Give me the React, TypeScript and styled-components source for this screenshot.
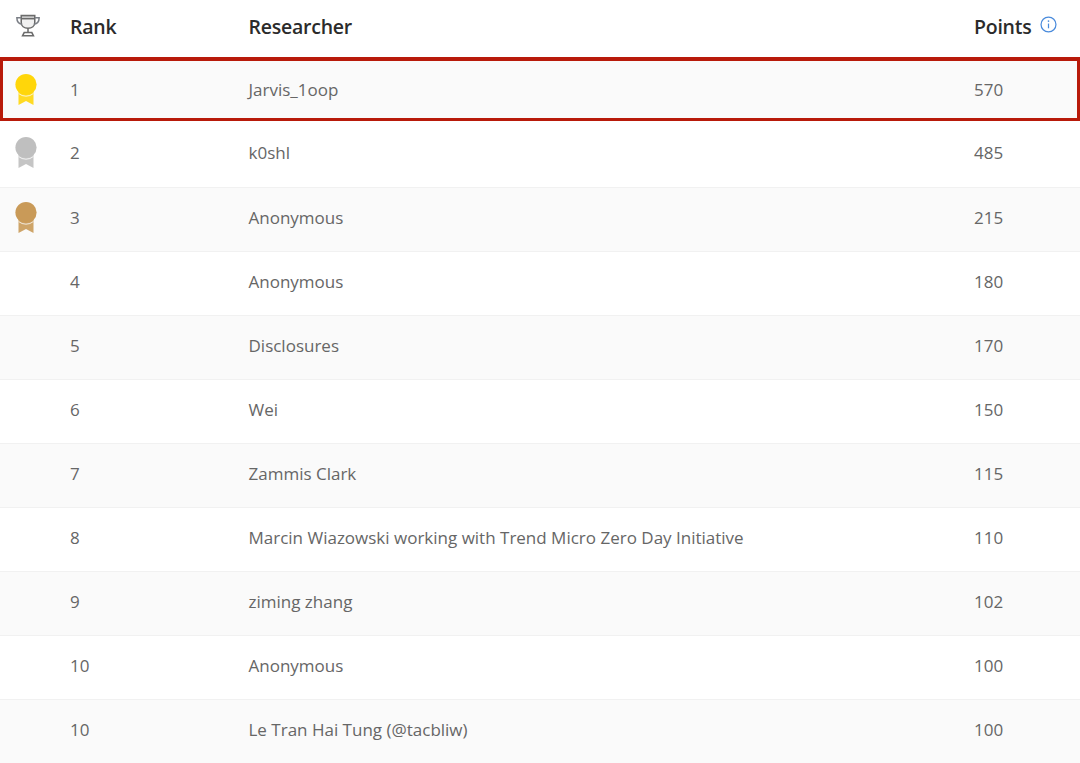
import React from "react";
import styled, { createGlobalStyle } from "styled-components";

const Global = createGlobalStyle`
  html, body { margin: 0; padding: 0; background: #fff; overflow: hidden; }
  body { font-family: "Open Sans", "Noto Sans", "Liberation Sans", sans-serif; }
`;

const Board = styled.div`
  width: 1080px;
  height: 763px;
  overflow: hidden;
  display: flex;
  flex-direction: column;
`;

const grid = `
  display: grid;
  grid-template-columns: 70px 178.5px 725.5px 1fr;
  align-items: center;
`;

const Header = styled.div`
  ${grid}
  height: 57px;
  flex: none;
  box-sizing: border-box;
  padding-bottom: 5px;
  font-size: 19.5px;
  font-weight: 600;
  color: #2b2b2b;
  letter-spacing: -0.24px;
`;

const Row = styled.div<{ $shaded: boolean; $height: number; $highlight: boolean }>`
  ${grid}
  flex: none;
  height: ${(p) => p.$height}px;
  box-sizing: border-box;
  padding-bottom: ${(p) => (p.$highlight ? 0 : 4)}px;
  background: ${(p) => (p.$shaded ? "#fafafa" : "#fff")};
  border-bottom: ${(p) => (p.$highlight ? "none" : "1px solid #f1f1f1")};
  font-size: 17px;
  color: #666;
  box-shadow: ${(p) => (p.$highlight ? "inset 0 0 0 3px #b81a0a, inset 0 4px 0 #b81a0a" : "none")};
`;

const IconCell = styled.div`
  display: flex;
  padding-left: 15px;
  align-items: center;
`;

const HeadIconCell = styled.div`
  display: flex;
  padding-left: 16px;
  align-items: center;
`;

const PointsHead = styled.div`
  display: flex;
  align-items: center;
  gap: 9px;
`;

const InfoIcon = styled.svg`
  margin-bottom: 4px;
`;

const MedalIcon = styled.svg`
  display: block;
  overflow: visible;
`;

const Trophy = () => (
  <svg width="24" height="24" viewBox="1 1 22 22" fill="none" stroke="#6b6b6b" strokeWidth="1.4">
    <path d="M5.800 2.500h12.400v6.500c0 3-2.600 5-6.200 5s-6.200-2-6.200-5z" fill="#f1f1f1" />
    <path d="M5.800 5.200h12.400" strokeWidth="1.600" />
    <path d="M5.800 4.500H1.800c0 3.500 1.500 5.500 4.800 6M18.200 4.500h4c0 3.500-1.500 5.500-4.800 6" stroke="#7b7f86" />
    <path d="M12 14v4M8.500 18h7l1.500 3H7z" />
  </svg>
);

const Medal = ({ color, shaded }: { color: string; shaded: boolean }) => (
  <MedalIcon width="22" height="31" viewBox="0 0 22 31">
    <path d="M3.500 17h15v14L11 27 3.500 31z" fill={color} opacity="0.9" />
    <circle cx="11" cy="10.500" r="10.600" fill={color} />
    <path d="M3.700 19.600a11.600 11.600 0 0 0 14.600 0" fill="none" stroke={shaded ? "#fafafa" : "#fff"} strokeWidth="1" strokeOpacity="0.8" />
  </MedalIcon>
);

const Info = () => (
  <InfoIcon width="17" height="17" viewBox="0 0 18 18" fill="none">
    <circle cx="9" cy="9" r="7.900" stroke="#4a8bdc" strokeWidth="1.300" />
    <path d="M9 8v5" stroke="#4a8bdc" strokeWidth="1.300" />
    <circle cx="9" cy="5.400" r=".9" fill="#4a8bdc" />
  </InfoIcon>
);

const rows: [string, string, string, string?][] = [
  ["1", "Jarvis_1oop", "570", "#ffd60a"],
  ["2", "k0shl", "485", "#bfbfbf"],
  ["3", "Anonymous", "215", "#c99a58"],
  ["4", "Anonymous", "180"],
  ["5", "Disclosures", "170"],
  ["6", "Wei", "150"],
  ["7", "Zammis Clark", "115"],
  ["8", "Marcin Wiazowski working with Trend Micro Zero Day Initiative", "110"],
  ["9", "ziming zhang", "102"],
  ["10", "Anonymous", "100"],
  ["10", "Le Tran Hai Tung (@tacbliw)", "100"],
];

export default function App() {
  return (
    <Board>
      <Global />
      <Header>
        <HeadIconCell><Trophy /></HeadIconCell>
        <div>Rank</div>
        <div>Researcher</div>
        <PointsHead>Points <Info /></PointsHead>
      </Header>
      {rows.map(([rank, name, pts, medal], i) => (
        <Row key={i} $shaded={i % 2 === 0} $height={i === 1 ? 67 : 64} $highlight={i === 0}>
          <IconCell>{medal && <Medal color={medal} shaded={i % 2 === 0} />}</IconCell>
          <div>{rank}</div>
          <div>{name}</div>
          <div>{pts}</div>
        </Row>
      ))}
    </Board>
  );
}
